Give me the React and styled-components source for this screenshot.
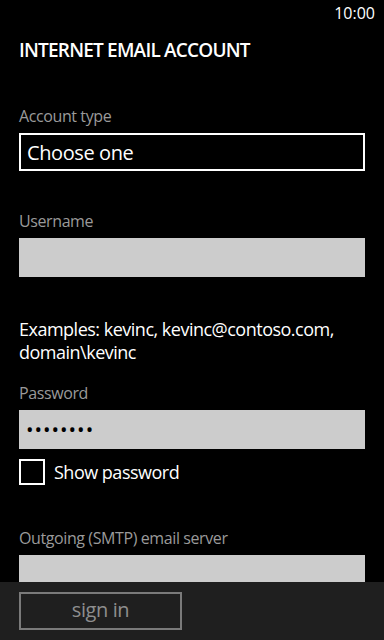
import React from 'react';
import styled, { createGlobalStyle } from 'styled-components';

const GlobalStyle = createGlobalStyle`
    html, body {
        margin: 0;
        padding: 0;
        background: #000;
    }
    body {
        font-family: "Open Sans", "Noto Sans", sans-serif;
        color: #fff;
    }
`;

const Screen = styled.div`
    width: 384px;
    height: 640px;
    display: flex;
    flex-direction: column;
    background: #000;
    overflow: hidden;
`;

const StatusBar = styled.div`
    height: 26px;
    display: flex;
    justify-content: flex-end;
    align-items: center;
    padding-right: 9px;
    font-size: 16px;
    line-height: 20px;
`;

const Content = styled.div`
    flex: 1;
    overflow: hidden;
    padding: 0 19px;
`;

const Title = styled.h1`
    margin: 11px 0 0;
    font-size: 19px;
    line-height: 26px;
    font-weight: 600;
    letter-spacing: -0.8px;
`;

const Field = styled.div`
    margin-top: ${(p) => p.$gap}px;
`;

const Label = styled.div`
    font-size: 16px;
    line-height: 22px;
    color: #9a9a9a;
    letter-spacing: -0.4px;
    margin-bottom: 6px;
`;

const Select = styled.div`
    box-sizing: border-box;
    height: 38px;
    border: 2px solid #fff;
    padding: 0 6px;
    display: flex;
    align-items: center;
    font-size: 20px;
    letter-spacing: -0.4px;
`;

const TextBox = styled.div`
    box-sizing: border-box;
    height: 39px;
    background: #cccccc;
    padding: 0 7px;
    display: flex;
    align-items: center;
    color: #000;
    font-size: 20px;
    letter-spacing: 1px;
`;

const Hint = styled.p`
    margin: 41px 0 0;
    font-size: 18px;
    line-height: 23px;
    letter-spacing: -0.5px;
`;

const CheckRow = styled.label`
    display: flex;
    align-items: center;
    gap: 9px;
    margin-top: 10px;
    font-size: 18px;
    letter-spacing: -0.5px;
`;

const Box = styled.span`
    box-sizing: border-box;
    width: 26px;
    height: 26px;
    border: 2px solid #fff;
`;

const AppBar = styled.div`
    height: 58px;
    flex-shrink: 0;
    background: #1f1f1f;
    padding: 10px 19px 0;
    box-sizing: border-box;
`;

const BarButton = styled.button`
    box-sizing: border-box;
    width: 163px;
    height: 38px;
    background: transparent;
    border: 2px solid #7a7a7a;
    color: #8e8e8e;
    font-family: "Open Sans", "Noto Sans", sans-serif;
    font-size: 20px;
    letter-spacing: -0.4px;
    padding: 0 0 3px;
`;

export default function App() {
    return (
        <Screen>
            <GlobalStyle />
            <StatusBar>10:00</StatusBar>
            <Content>
                <Title>INTERNET EMAIL ACCOUNT</Title>
                <Field $gap={42}>
                    <Label>Account type</Label>
                    <Select>Choose one</Select>
                </Field>
                <Field $gap={39}>
                    <Label>Username</Label>
                    <TextBox />
                </Field>
                <Hint>
                    Examples: kevinc, kevinc@contoso.com,
                    <br />
                    domain\kevinc
                </Hint>
                <Field $gap={18}>
                    <Label>Password</Label>
                    <TextBox>••••••••</TextBox>
                </Field>
                <CheckRow>
                    <Box />
                    Show password
                </CheckRow>
                <Field $gap={42}>
                    <Label>Outgoing (SMTP) email server</Label>
                    <TextBox />
                </Field>
            </Content>
            <AppBar>
                <BarButton>sign in</BarButton>
            </AppBar>
        </Screen>
    );
}
